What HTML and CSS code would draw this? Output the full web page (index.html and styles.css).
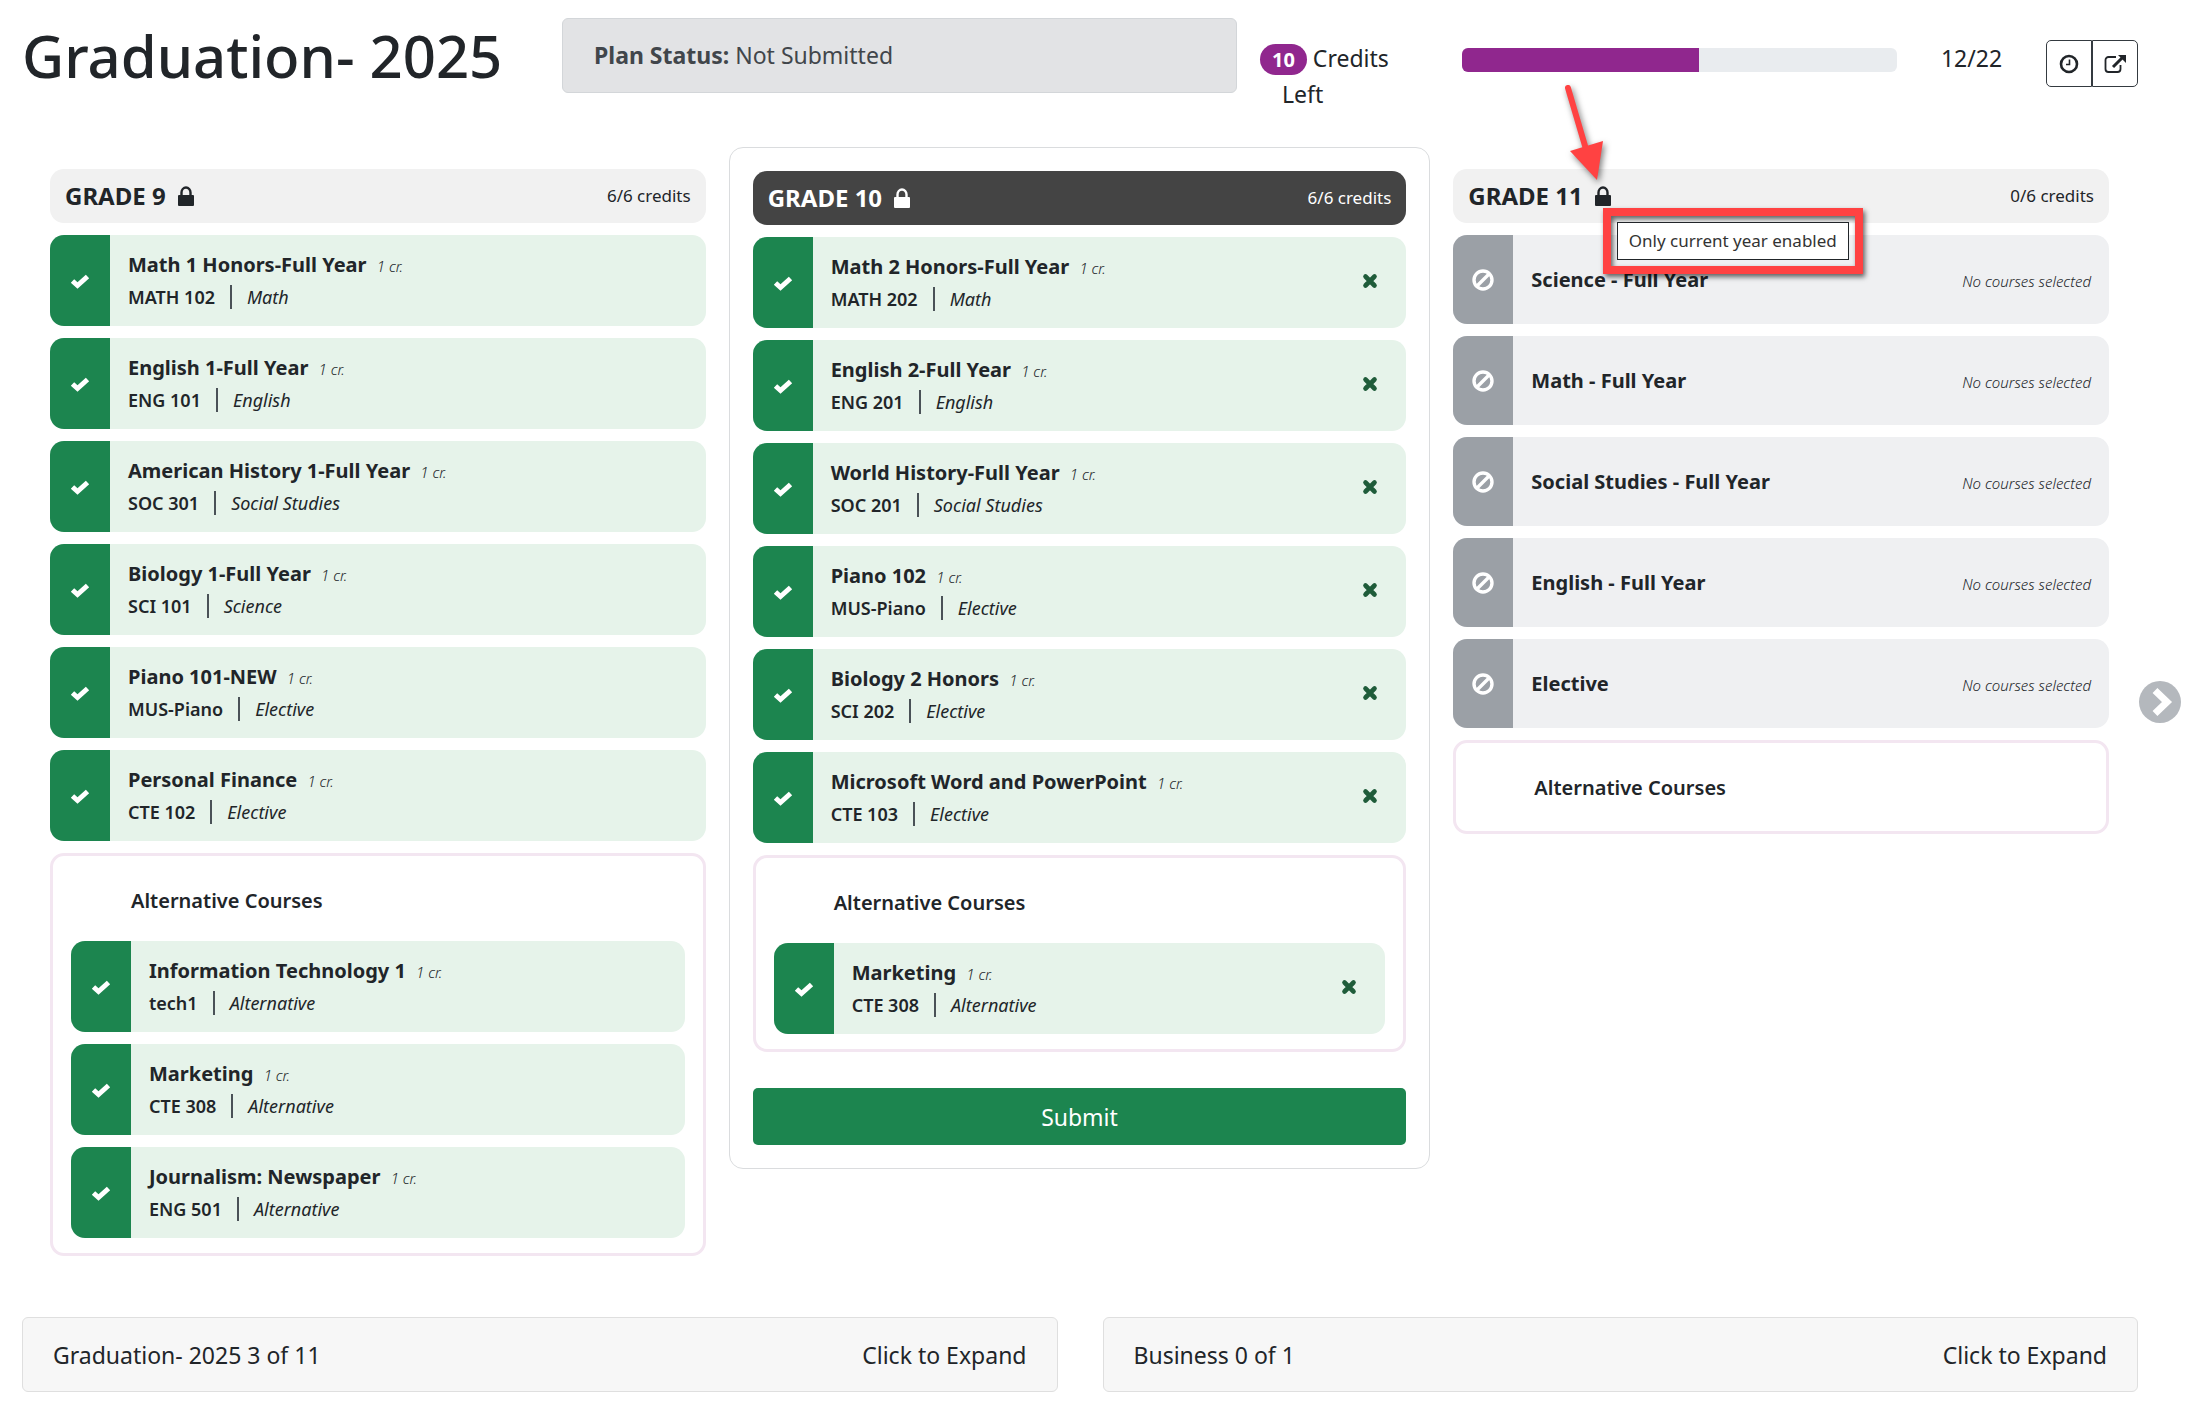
FILE: index.html
```
<!DOCTYPE html>
<html lang="en">
  <head>
    <meta charset="utf-8" />
    <meta name="viewport" content="width=device-width, initial-scale=1.0" />
    <title>Graduation- 2025</title>
    <link rel="stylesheet" href="styles.css" />
  </head>
  <body>
    <!-- Shared icons -->
    <svg class="sprite" aria-hidden="true">
      <symbol id="icon-check" viewBox="0 0 20 20">
        <path d="M2.500 10 7.500 14.500 17.500 5.500" fill="none" stroke="currentColor" stroke-width="5" />
      </symbol>
      <symbol id="icon-times" viewBox="0 0 16 16">
        <path d="M3.500 3.500 12.500 12.500M12.500 3.500 3.500 12.500" fill="none" stroke="currentColor" stroke-width="4.600" stroke-linecap="round" />
      </symbol>
      <symbol id="icon-ban" viewBox="0 0 22 22">
        <circle cx="11" cy="11" r="9" fill="none" stroke="currentColor" stroke-width="3.400" />
        <path d="M5 17 17 5" stroke="currentColor" stroke-width="3.400" />
      </symbol>
      <symbol id="icon-lock" viewBox="0 0 16 20">
        <path d="M3.500 10V6.500a4.500 5 0 0 1 9 0V10" fill="none" stroke="currentColor" stroke-width="2.400" />
        <rect x="0" y="9" width="16" height="11" rx="1" fill="currentColor" />
      </symbol>
    </svg>

    <header class="plan-header">
      <h1>Graduation- 2025</h1>
      <div class="plan-status"><strong>Plan Status:</strong> Not Submitted</div>
      <div class="credits-left">
        <span class="badge">10</span> Credits <span class="left-word">Left</span>
      </div>
      <div class="progress" role="progressbar" aria-label="Credits" aria-valuenow="12" aria-valuemin="0" aria-valuemax="22">
        <div class="progress-bar" style="width: 54.5%"></div>
      </div>
      <div class="progress-count">12/22</div>
      <div class="tools">
        <button type="button" aria-label="History">
          <svg width="20" height="20" viewBox="0 0 20 20" fill="none" stroke="currentColor">
            <circle cx="10" cy="10" r="8" stroke-width="2.6" />
            <path d="M10.5 5.5v5H7" stroke-width="1.6" />
          </svg>
        </button>
        <button type="button" aria-label="Open">
          <svg width="24" height="20" viewBox="0 0 24 20" fill="none" stroke="currentColor">
            <path d="M13 3H5.500a3 3 0 0 0-3 3v9a3 3 0 0 0 3 3h9a3 3 0 0 0 3-3v-4" stroke-width="1.8" />
            <path d="M10 13 19 4" stroke-width="3" />
            <path d="M15 1h8v8z" fill="currentColor" stroke="none" />
          </svg>
        </button>
      </div>
    </header>

    <main class="board">
      <section class="grade">
        <div class="grade-head">
          <h2>GRADE 9</h2>
          <svg class="lock"><use href="#icon-lock" /></svg>
          <span class="grade-credits">6/6 credits</span>
        </div>
        <article class="course">
          <div class="mark"><svg><use href="#icon-check" /></svg></div>
          <div class="info">
            <h3>Math 1 Honors-Full Year <em>1 cr.</em></h3>
            <p><b>MATH 102</b><i>Math</i></p>
          </div>
        </article>
        <article class="course">
          <div class="mark"><svg><use href="#icon-check" /></svg></div>
          <div class="info">
            <h3>English 1-Full Year <em>1 cr.</em></h3>
            <p><b>ENG 101</b><i>English</i></p>
          </div>
        </article>
        <article class="course">
          <div class="mark"><svg><use href="#icon-check" /></svg></div>
          <div class="info">
            <h3>American History 1-Full Year <em>1 cr.</em></h3>
            <p><b>SOC 301</b><i>Social Studies</i></p>
          </div>
        </article>
        <article class="course">
          <div class="mark"><svg><use href="#icon-check" /></svg></div>
          <div class="info">
            <h3>Biology 1-Full Year <em>1 cr.</em></h3>
            <p><b>SCI 101</b><i>Science</i></p>
          </div>
        </article>
        <article class="course">
          <div class="mark"><svg><use href="#icon-check" /></svg></div>
          <div class="info">
            <h3>Piano 101-NEW <em>1 cr.</em></h3>
            <p><b>MUS-Piano</b><i>Elective</i></p>
          </div>
        </article>
        <article class="course">
          <div class="mark"><svg><use href="#icon-check" /></svg></div>
          <div class="info">
            <h3>Personal Finance <em>1 cr.</em></h3>
            <p><b>CTE 102</b><i>Elective</i></p>
          </div>
        </article>
        <div class="alternatives">
          <h3>Alternative Courses</h3>
          <article class="course">
            <div class="mark"><svg><use href="#icon-check" /></svg></div>
            <div class="info">
              <h3>Information Technology 1 <em>1 cr.</em></h3>
              <p><b>tech1</b><i>Alternative</i></p>
            </div>
          </article>
          <article class="course">
            <div class="mark"><svg><use href="#icon-check" /></svg></div>
            <div class="info">
              <h3>Marketing <em>1 cr.</em></h3>
              <p><b>CTE 308</b><i>Alternative</i></p>
            </div>
          </article>
          <article class="course">
            <div class="mark"><svg><use href="#icon-check" /></svg></div>
            <div class="info">
              <h3>Journalism: Newspaper <em>1 cr.</em></h3>
              <p><b>ENG 501</b><i>Alternative</i></p>
            </div>
          </article>
        </div>
      </section>

      <section class="grade current">
        <div class="grade-head">
          <h2>GRADE 10</h2>
          <svg class="lock"><use href="#icon-lock" /></svg>
          <span class="grade-credits">6/6 credits</span>
        </div>
        <article class="course">
          <div class="mark"><svg><use href="#icon-check" /></svg></div>
          <div class="info">
            <h3>Math 2 Honors-Full Year <em>1 cr.</em></h3>
            <p><b>MATH 202</b><i>Math</i></p>
          </div>
          <button type="button" class="remove" aria-label="Remove Math 2 Honors"><svg><use href="#icon-times" /></svg></button>
        </article>
        <article class="course">
          <div class="mark"><svg><use href="#icon-check" /></svg></div>
          <div class="info">
            <h3>English 2-Full Year <em>1 cr.</em></h3>
            <p><b>ENG 201</b><i>English</i></p>
          </div>
          <button type="button" class="remove" aria-label="Remove English 2"><svg><use href="#icon-times" /></svg></button>
        </article>
        <article class="course">
          <div class="mark"><svg><use href="#icon-check" /></svg></div>
          <div class="info">
            <h3>World History-Full Year <em>1 cr.</em></h3>
            <p><b>SOC 201</b><i>Social Studies</i></p>
          </div>
          <button type="button" class="remove" aria-label="Remove World History"><svg><use href="#icon-times" /></svg></button>
        </article>
        <article class="course">
          <div class="mark"><svg><use href="#icon-check" /></svg></div>
          <div class="info">
            <h3>Piano 102 <em>1 cr.</em></h3>
            <p><b>MUS-Piano</b><i>Elective</i></p>
          </div>
          <button type="button" class="remove" aria-label="Remove Piano 102"><svg><use href="#icon-times" /></svg></button>
        </article>
        <article class="course">
          <div class="mark"><svg><use href="#icon-check" /></svg></div>
          <div class="info">
            <h3>Biology 2 Honors <em>1 cr.</em></h3>
            <p><b>SCI 202</b><i>Elective</i></p>
          </div>
          <button type="button" class="remove" aria-label="Remove Biology 2 Honors"><svg><use href="#icon-times" /></svg></button>
        </article>
        <article class="course">
          <div class="mark"><svg><use href="#icon-check" /></svg></div>
          <div class="info">
            <h3>Microsoft Word and PowerPoint <em>1 cr.</em></h3>
            <p><b>CTE 103</b><i>Elective</i></p>
          </div>
          <button type="button" class="remove" aria-label="Remove Microsoft Word and PowerPoint"><svg><use href="#icon-times" /></svg></button>
        </article>
        <div class="alternatives">
          <h3>Alternative Courses</h3>
          <article class="course">
            <div class="mark"><svg><use href="#icon-check" /></svg></div>
            <div class="info">
              <h3>Marketing <em>1 cr.</em></h3>
              <p><b>CTE 308</b><i>Alternative</i></p>
            </div>
            <button type="button" class="remove" aria-label="Remove Marketing"><svg><use href="#icon-times" /></svg></button>
          </article>
        </div>
        <button type="submit" class="submit">Submit</button>
      </section>

      <section class="grade">
        <div class="grade-head">
          <h2>GRADE 11</h2>
          <span class="lock-wrap">
            <svg class="lock"><use href="#icon-lock" /></svg>
            <svg class="arrow" width="60" height="110" viewBox="0 0 60 110">
              <path d="M8 4 28 72" stroke="#ff4242" stroke-width="6" stroke-linecap="round" />
              <path d="M10 67 43 57 37 96z" fill="#ff4242" />
            </svg>
            <span class="callout"><span class="tooltip" role="tooltip">Only current year enabled</span></span>
          </span>
          <span class="grade-credits">0/6 credits</span>
        </div>
        <article class="course empty">
          <div class="mark"><svg><use href="#icon-ban" /></svg></div>
          <h3>Science - Full Year</h3>
          <em>No courses selected</em>
        </article>
        <article class="course empty">
          <div class="mark"><svg><use href="#icon-ban" /></svg></div>
          <h3>Math - Full Year</h3>
          <em>No courses selected</em>
        </article>
        <article class="course empty">
          <div class="mark"><svg><use href="#icon-ban" /></svg></div>
          <h3>Social Studies - Full Year</h3>
          <em>No courses selected</em>
        </article>
        <article class="course empty">
          <div class="mark"><svg><use href="#icon-ban" /></svg></div>
          <h3>English - Full Year</h3>
          <em>No courses selected</em>
        </article>
        <article class="course empty">
          <div class="mark"><svg><use href="#icon-ban" /></svg></div>
          <h3>Elective</h3>
          <em>No courses selected</em>
        </article>
        <div class="alternatives">
          <h3>Alternative Courses</h3>
        </div>
      </section>

      <button type="button" class="next" aria-label="Next grade">
        <svg width="42" height="42" viewBox="0 0 42 42">
          <circle cx="21" cy="21" r="21" fill="#b4b8bd" />
          <path d="M16 9.500 28 21 16 32.500" fill="none" stroke="#fff" stroke-width="7" />
        </svg>
      </button>
    </main>

    <footer class="requirements">
      <button type="button"><span>Graduation- 2025 3 of 11</span><span>Click to Expand</span></button>
      <button type="button"><span>Business 0 of 1</span><span>Click to Expand</span></button>
    </footer>
  </body>
</html>
```
FILE: styles.css
```
* {
  box-sizing: border-box;
}

body {
  margin: 0;
  padding: 18px 52px 28px 22px;
  font-family: "Noto Sans", "Open Sans", sans-serif;
  font-size: 23px;
  line-height: 36px;
  color: #212529;
  background-color: #fff;
}

h1,
h2,
h3,
p {
  margin: 0;
}

button {
  font-family: inherit;
  color: inherit;
  cursor: pointer;
}

.sprite {
  display: none;
}

/* Header */
.plan-header {
  display: grid;
  grid-template-columns: 540fr 675fr 225fr 435fr 149fr 92fr;
  align-items: start;
  height: 129px;
}

h1 {
  font-size: 58px;
  font-weight: 500;
  line-height: 76px;
  white-space: nowrap;
}

.plan-status {
  padding: 18px 31px;
  height: 75px;
  border: 1px solid #d3d6d9;
  border-radius: 6px;
  background-color: #e2e3e5;
  color: #41464b;
}

.credits-left {
  padding: 22px 60px 0 23px;
}

.badge {
  display: inline-block;
  padding: 0 12px;
  border-radius: 16px;
  background-color: #90278e;
  color: #fff;
  font-size: 20px;
  font-weight: 700;
  line-height: 31px;
}

.left-word {
  padding-left: 22px;
}

.progress {
  height: 24px;
  margin-top: 30px;
  border-radius: 6px;
  background-color: #e9ecef;
  overflow: hidden;
}

.progress-bar {
  height: 100%;
  background-color: #90278e;
}

.progress-count {
  padding-top: 22px;
  text-align: center;
}

.tools {
  display: flex;
  margin-top: 22px;
}

.tools button {
  display: flex;
  flex: 1;
  align-items: center;
  justify-content: center;
  height: 47px;
  padding: 0;
  border: 1px solid #343a40;
  border-radius: 0 5px 5px 0;
  background-color: #fff;
}

.tools button:first-child {
  border-radius: 5px 0 0 5px;
}

/* Grade columns */
.board {
  position: relative;
  display: grid;
  grid-template-columns: repeat(3, 1fr);
  align-items: start;
  margin: 0 6px 61px 5px;
}

.grade {
  display: flex;
  flex-direction: column;
  gap: 12px;
  padding: 22px 23px 0;
}

.grade.current {
  padding: 23px;
  border: 1px solid #dadcde;
  border-radius: 14px;
}

.grade-head {
  display: flex;
  align-items: center;
  gap: 12px;
  height: 54px;
  padding: 0 15px;
  border-radius: 14px;
  background-color: #f1f1f1;
}

.current .grade-head {
  background-color: #444;
  color: #fff;
}

h2 {
  font-size: 24px;
  font-weight: 700;
}

.lock {
  display: block;
  width: 16px;
  height: 20px;
}

.lock-wrap {
  position: relative;
}

.grade-credits {
  margin-left: auto;
  font-size: 17px;
}

.course {
  display: flex;
  align-items: center;
  height: 91px;
  border-radius: 14px;
  background-color: #e6f3ea;
  overflow: hidden;
}

.mark {
  display: flex;
  align-items: center;
  justify-content: center;
  width: 60px;
  height: 100%;
  margin-right: 18px;
  background-color: #1c854f;
  color: #fff;
}

.mark svg {
  width: 20px;
  height: 20px;
}

h3 {
  font-size: 20px;
  font-weight: 600;
  line-height: 32px;
}

.course h3 {
  font-weight: 700;
}

h3 em {
  margin-left: 5px;
  font-size: 15px;
  font-weight: 300;
  line-height: 20px;
}

.info p {
  display: flex;
  align-items: center;
  font-size: 18px;
  line-height: 32px;
}

.info b {
  font-weight: 600;
}

.info i {
  display: flex;
  align-items: center;
}

.info i::before {
  content: "";
  height: 24px;
  margin: 0 15px;
  border-left: 2px solid #4a5157;
}

.remove {
  display: flex;
  margin-left: auto;
  padding: 10px 28px 13px;
  border: 0;
  background: none;
  color: #1f5c3a;
}

.remove svg {
  width: 16px;
  height: 16px;
}

.course.empty {
  height: 89px;
  background-color: #eff0f2;
}

.empty .mark {
  background-color: #9ba0a6;
}

.empty .mark svg {
  width: 22px;
  height: 22px;
}

.empty > em {
  margin-left: auto;
  padding: 3px 18px 0 0;
  font-size: 15px;
  font-weight: 300;
}

.alternatives {
  display: flex;
  flex-direction: column;
  gap: 12px;
  padding: 15px 18px;
  border: 3px solid #f3e6f1;
  border-radius: 14px;
}

.alternatives > h3 {
  padding: 14px 60px 12px;
}

.submit {
  height: 57px;
  margin-top: 24px;
  border: 0;
  border-radius: 5px;
  background-color: #1c854f;
  color: #fff;
  font-size: 23px;
}

/* Pointer and note over the locked grade */
.arrow {
  position: absolute;
  right: -9px;
  bottom: 12px;
  filter: drop-shadow(2px 3px 3px rgba(0, 0, 0, 0.5));
}

.callout {
  position: absolute;
  top: 22px;
  left: 8px;
  z-index: 1;
  padding: 6px;
  border: 8px solid #ff4242;
  box-shadow: 2px 3px 5px rgba(0, 0, 0, 0.6), inset 2px 3px 5px rgba(0, 0, 0, 0.6);
}

.tooltip {
  display: block;
  padding: 0 11px;
  border: 1px solid #212529;
  background-color: #fff;
  color: #333;
  font-size: 17px;
  white-space: nowrap;
}

.next {
  position: absolute;
  top: 534px;
  right: -49px;
  padding: 0;
  border: 0;
  background: none;
}

.next svg {
  display: block;
}

/* Requirement panels */
.requirements {
  display: grid;
  grid-template-columns: 1fr 1fr;
  gap: 45px;
}

.requirements button {
  display: flex;
  align-items: center;
  justify-content: space-between;
  height: 75px;
  padding: 0 30px;
  border: 1px solid #dfdfdf;
  border-radius: 6px;
  background-color: #f7f7f7;
  font-size: 23px;
}
```
